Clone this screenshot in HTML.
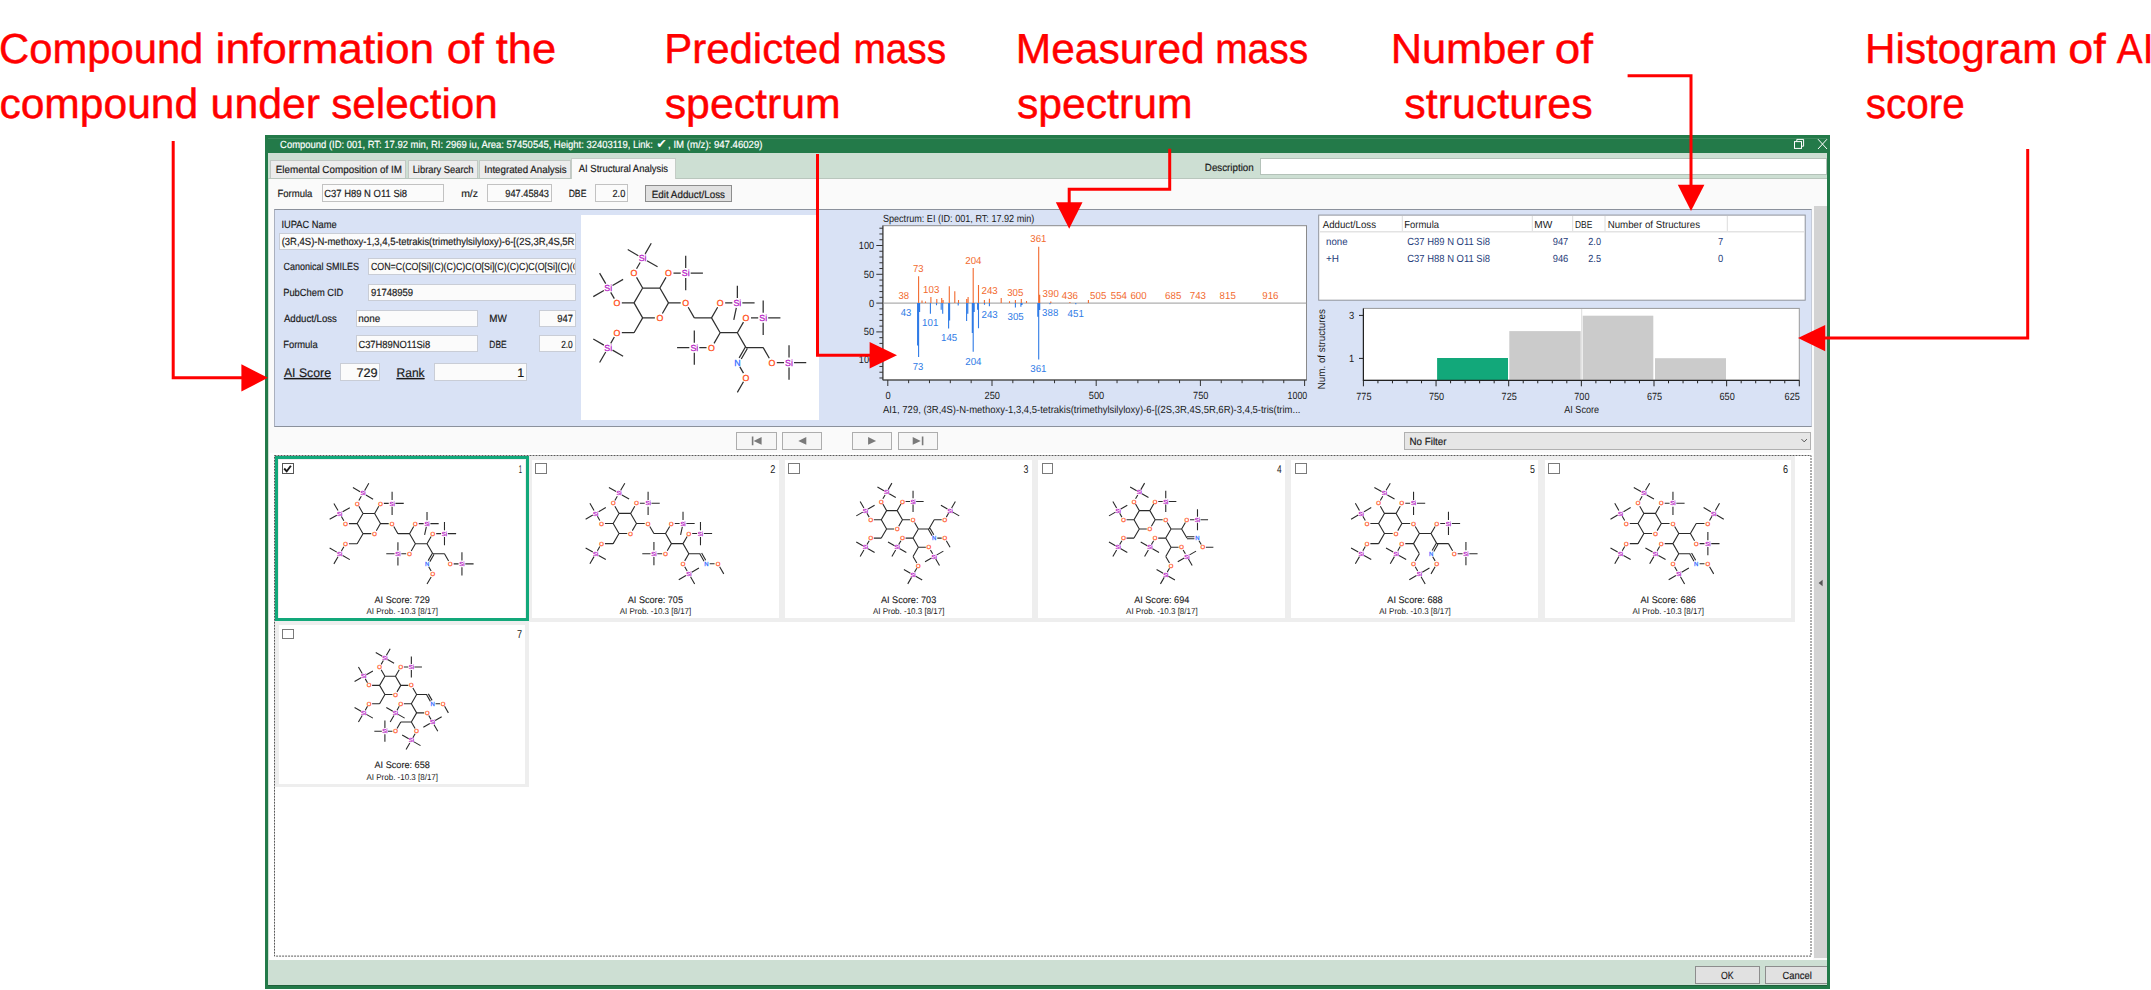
<!DOCTYPE html>
<html lang="en"><head><meta charset="utf-8"><title>AI Structural Analysis</title>
<style>
html,body{margin:0;padding:0;background:#fff;}
body{width:2151px;height:990px;position:relative;overflow:hidden;font-family:"Liberation Sans",sans-serif;}
.b{position:absolute;box-sizing:border-box;}
body>svg{position:absolute;left:0;top:0;}
</style></head><body>
<div class="b" style="left:264.6px;top:135px;width:1565.4px;height:854px;background:#237a49;"></div>
<div class="b" style="left:267.6px;top:153.3px;width:1559.4px;height:831.9px;background:#cddfd3;"></div>
<div class="b" style="left:268.6px;top:178.7px;width:1558.4px;height:781.3px;background:#fafafa;"></div>
<div class="b" style="left:267.6px;top:178.2px;width:1559.4px;height:1px;background:#b9c6bd;"></div>
<div class="b" style="left:267.6px;top:137.6px;width:1559.4px;height:1px;background:#3d8a5e;"></div>
<div class="b" style="left:1260.4px;top:157.9px;width:566.6px;height:17.4px;background:#fff;border:1px solid #b4c2b9;"></div>
<div class="b" style="left:270.3px;top:160.4px;width:136px;height:18px;background:#ececec;border:1px solid #c2c8c4;border-bottom:none;"></div>
<div class="b" style="left:407.7px;top:160.4px;width:70.3px;height:18px;background:#ececec;border:1px solid #c2c8c4;border-bottom:none;"></div>
<div class="b" style="left:479.4px;top:160.4px;width:92px;height:18px;background:#ececec;border:1px solid #c2c8c4;border-bottom:none;"></div>
<div class="b" style="left:571.4px;top:158.3px;width:105px;height:21.1px;background:#fafafa;border:1px solid #c4ccc6;border-bottom:none;"></div>
<div class="b" style="left:321.8px;top:184.4px;width:122px;height:17.6px;background:#fbfbfb;border:1px solid #c2c2c2;"></div>
<div class="b" style="left:487px;top:184.4px;width:64.6px;height:17.6px;background:#fbfbfb;border:1px solid #c2c2c2;"></div>
<div class="b" style="left:595.2px;top:184.4px;width:32.5px;height:17.6px;background:#fbfbfb;border:1px solid #c2c2c2;"></div>
<div class="b" style="left:645px;top:184.5px;width:87px;height:17.7px;background:#e1e1e1;border:1px solid #8d8d8d;border-bottom-width:1.6px;border-right-width:1.4px;"></div>
<div class="b" style="left:274px;top:209.2px;width:1537.7px;height:217.4px;background:#d9e2f5;border:1px solid #8b919c;border-left-color:#aab0be;border-right-color:#c5cbd8;"></div>
<div class="b" style="left:279.4px;top:233px;width:296.2px;height:16.7px;background:#fbfbfb;border:1px solid #c9cdd6;"></div>
<div class="b" style="left:368.3px;top:257.5px;width:207.3px;height:17px;background:#fbfbfb;border:1px solid #c9cdd6;"></div>
<div class="b" style="left:368.3px;top:283.5px;width:207.3px;height:17px;background:#fbfbfb;border:1px solid #c9cdd6;"></div>
<div class="b" style="left:356.3px;top:309.5px;width:121.5px;height:17px;background:#fbfbfb;border:1px solid #c9cdd6;"></div>
<div class="b" style="left:539.2px;top:309.5px;width:36.4px;height:17px;background:#fbfbfb;border:1px solid #c9cdd6;"></div>
<div class="b" style="left:356.3px;top:335.4px;width:121.5px;height:17px;background:#fbfbfb;border:1px solid #c9cdd6;"></div>
<div class="b" style="left:539.2px;top:335.4px;width:36.4px;height:17px;background:#fbfbfb;border:1px solid #c9cdd6;"></div>
<div class="b" style="left:339.9px;top:363.4px;width:39.7px;height:18.1px;background:#fbfbfb;border:1px solid #c9cdd6;"></div>
<div class="b" style="left:434.4px;top:363.4px;width:92.6px;height:18.1px;background:#fbfbfb;border:1px solid #c9cdd6;"></div>
<div class="b" style="left:581.2px;top:215px;width:238.3px;height:205px;background:#fff;"></div>
<div class="b" style="left:736.2px;top:432.3px;width:40.5px;height:17.3px;background:#f6f6f6;border:1px solid #adadad;"></div>
<div class="b" style="left:781.9px;top:432.3px;width:40.2px;height:17.3px;background:#f6f6f6;border:1px solid #adadad;"></div>
<div class="b" style="left:851.9px;top:432.3px;width:40.2px;height:17.3px;background:#f6f6f6;border:1px solid #adadad;"></div>
<div class="b" style="left:897.5px;top:432.3px;width:40.4px;height:17.3px;background:#f6f6f6;border:1px solid #adadad;"></div>
<div class="b" style="left:1404.3px;top:432.3px;width:406.7px;height:17.5px;background:#e6e6e6;border:1px solid #b0b0b0;"></div>
<div class="b" style="left:269.7px;top:452.5px;width:1543.8px;height:507.5px;background:#fff;"></div>
<div class="b" style="left:275.3px;top:456.3px;width:253.4px;height:165.3px;background:#eeeeee;"></div>
<div class="b" style="left:278.6px;top:459.6px;width:246.8px;height:158.7px;background:#fff;"></div>
<div class="b" style="left:275.1px;top:456.2px;width:253.6px;height:165.3px;border:3.2px solid #12a87a;"></div>
<div class="b" style="left:282px;top:463.3px;width:11.8px;height:10.5px;background:#fff;border:1px solid #555;"></div>
<div class="b" style="left:528.5px;top:456.3px;width:253.4px;height:165.3px;background:#eeeeee;"></div>
<div class="b" style="left:531.8px;top:459.6px;width:246.8px;height:158.7px;background:#fff;"></div>
<div class="b" style="left:535.2px;top:463.3px;width:11.8px;height:10.5px;background:#fff;border:1px solid #7a7a7a;"></div>
<div class="b" style="left:781.7px;top:456.3px;width:253.4px;height:165.3px;background:#eeeeee;"></div>
<div class="b" style="left:785px;top:459.6px;width:246.8px;height:158.7px;background:#fff;"></div>
<div class="b" style="left:788.4px;top:463.3px;width:11.8px;height:10.5px;background:#fff;border:1px solid #7a7a7a;"></div>
<div class="b" style="left:1034.9px;top:456.3px;width:253.4px;height:165.3px;background:#eeeeee;"></div>
<div class="b" style="left:1038.2px;top:459.6px;width:246.8px;height:158.7px;background:#fff;"></div>
<div class="b" style="left:1041.6px;top:463.3px;width:11.8px;height:10.5px;background:#fff;border:1px solid #7a7a7a;"></div>
<div class="b" style="left:1288.1px;top:456.3px;width:253.4px;height:165.3px;background:#eeeeee;"></div>
<div class="b" style="left:1291.4px;top:459.6px;width:246.8px;height:158.7px;background:#fff;"></div>
<div class="b" style="left:1294.8px;top:463.3px;width:11.8px;height:10.5px;background:#fff;border:1px solid #7a7a7a;"></div>
<div class="b" style="left:1541.3px;top:456.3px;width:253.4px;height:165.3px;background:#eeeeee;"></div>
<div class="b" style="left:1544.6px;top:459.6px;width:246.8px;height:158.7px;background:#fff;"></div>
<div class="b" style="left:1548px;top:463.3px;width:11.8px;height:10.5px;background:#fff;border:1px solid #7a7a7a;"></div>
<div class="b" style="left:275.3px;top:621.7px;width:253.4px;height:165.3px;background:#eeeeee;"></div>
<div class="b" style="left:278.6px;top:625px;width:246.8px;height:158.7px;background:#fff;"></div>
<div class="b" style="left:282px;top:628.7px;width:11.8px;height:10.5px;background:#fff;border:1px solid #7a7a7a;"></div>
<div class="b" style="left:1814px;top:206px;width:12.6px;height:752px;background:#d3d3d3;"></div>
<div class="b" style="left:1695px;top:966.4px;width:64.5px;height:17.3px;background:#e1e1e1;border:1px solid #8d8d8d;"></div>
<div class="b" style="left:1764.7px;top:966.4px;width:64.3px;height:17.3px;background:#e1e1e1;border:1px solid #8d8d8d;border-right:none;width:62.3px;"></div>
<div class="b" style="left:1827px;top:135px;width:3px;height:854px;background:#237a49;"></div>
<div class="b" style="left:264.6px;top:985.2px;width:1565.4px;height:3.8px;background:#237a49;"></div>
<div class="b" style="left:267.6px;top:984.7px;width:1559.4px;height:1px;background:#1f5f3a;"></div>
<svg width="2151" height="990" viewBox="0 0 2151 990" text-rendering="geometricPrecision" font-family="Liberation Sans, sans-serif">
<g fill="#1a1a1a" stroke="#1a1a1a" stroke-width="0.18">
<text y="63" font-size="42" fill="#ff0000" stroke="#ff0000" stroke-width="0.45"><tspan x="-0.94" textLength="204.27" lengthAdjust="spacingAndGlyphs">Compound</tspan> <tspan x="215.63" textLength="218.53" lengthAdjust="spacingAndGlyphs">information</tspan> <tspan x="446.79" textLength="36.97" lengthAdjust="spacingAndGlyphs">of</tspan> <tspan x="495.7" textLength="60.37" lengthAdjust="spacingAndGlyphs">the</tspan></text>
<text y="118" font-size="42" fill="#ff0000" stroke="#ff0000" stroke-width="0.45"><tspan x="-0.64" textLength="198.81" lengthAdjust="spacingAndGlyphs">compound</tspan> <tspan x="210.61" textLength="109.41" lengthAdjust="spacingAndGlyphs">under</tspan> <tspan x="331.21" textLength="166.53" lengthAdjust="spacingAndGlyphs">selection</tspan></text>
<text y="63" font-size="42" fill="#ff0000" stroke="#ff0000" stroke-width="0.45"><tspan x="664.21" textLength="177.25" lengthAdjust="spacingAndGlyphs">Predicted</tspan> <tspan x="853.39" textLength="92.66" lengthAdjust="spacingAndGlyphs">mass</tspan></text>
<text y="118" font-size="42" fill="#ff0000" stroke="#ff0000" stroke-width="0.45"><tspan x="664.69" textLength="175.95" lengthAdjust="spacingAndGlyphs">spectrum</tspan></text>
<text y="63" font-size="42" fill="#ff0000" stroke="#ff0000" stroke-width="0.45"><tspan x="1015.87" textLength="188.89" lengthAdjust="spacingAndGlyphs">Measured</tspan> <tspan x="1215.29" textLength="92.77" lengthAdjust="spacingAndGlyphs">mass</tspan></text>
<text y="118" font-size="42" fill="#ff0000" stroke="#ff0000" stroke-width="0.45"><tspan x="1016.9" textLength="175.64" lengthAdjust="spacingAndGlyphs">spectrum</tspan></text>
<text y="63" font-size="42" fill="#ff0000" stroke="#ff0000" stroke-width="0.45"><tspan x="1390.69" textLength="154.24" lengthAdjust="spacingAndGlyphs">Number</tspan> <tspan x="1554.73" textLength="38.13" lengthAdjust="spacingAndGlyphs">of</tspan></text>
<text y="118" font-size="42" fill="#ff0000" stroke="#ff0000" stroke-width="0.45"><tspan x="1404.29" textLength="188.31" lengthAdjust="spacingAndGlyphs">structures</tspan></text>
<text y="63" font-size="42" fill="#ff0000" stroke="#ff0000" stroke-width="0.45"><tspan x="1865.09" textLength="192.29" lengthAdjust="spacingAndGlyphs">Histogram</tspan> <tspan x="2068.16" textLength="37.5" lengthAdjust="spacingAndGlyphs">of</tspan> <tspan x="2116.87" textLength="36.53" lengthAdjust="spacingAndGlyphs">AI</tspan></text>
<text y="118" font-size="42" fill="#ff0000" stroke="#ff0000" stroke-width="0.45"><tspan x="1865.66" textLength="98.99" lengthAdjust="spacingAndGlyphs">score</tspan></text>
<text y="147.6" font-size="10.4" fill="#fff" stroke="#fff"><tspan x="280.08" textLength="372.83" lengthAdjust="spacingAndGlyphs">Compound (ID: 001, RT: 17.92 min, RI: 2969 iu, Area: 57450545, Height: 32403119, Link:</tspan> <tspan x="656.2" y="148.2" font-size="12.6" stroke="none" font-family="DejaVu Sans, sans-serif">✔</tspan><tspan y="147.6" x="668.1" textLength="94.35" lengthAdjust="spacingAndGlyphs">, IM (m/z): 947.46029)</tspan></text>
<text x="1204.85" y="171" font-size="10.4" textLength="48.82" lengthAdjust="spacingAndGlyphs" fill="#1a1a1a">Description</text>
<text x="275.74" y="173.1" font-size="10.4" textLength="126.12" lengthAdjust="spacingAndGlyphs" fill="#1a1a1a">Elemental Composition of IM</text>
<text x="412.68" y="173.1" font-size="10.4" textLength="60.76" lengthAdjust="spacingAndGlyphs" fill="#1a1a1a">Library Search</text>
<text x="484.25" y="173.1" font-size="10.4" textLength="82.34" lengthAdjust="spacingAndGlyphs" fill="#1a1a1a">Integrated Analysis</text>
<text x="578.83" y="171.7" font-size="10.4" textLength="89.16" lengthAdjust="spacingAndGlyphs" fill="#1a1a1a">AI Structural Analysis</text>
<text x="277.47" y="197.1" font-size="10.4" textLength="34.88" lengthAdjust="spacingAndGlyphs" fill="#1a1a1a">Formula</text>
<text x="324.18" y="197.1" font-size="10.4" textLength="82.88" lengthAdjust="spacingAndGlyphs" fill="#1a1a1a">C37 H89 N O11 Si8</text>
<text x="461.16" y="197.1" font-size="10.4" textLength="16.8" lengthAdjust="spacingAndGlyphs" fill="#1a1a1a">m/z</text>
<text x="505.33" y="197.1" font-size="10.4" textLength="43.62" lengthAdjust="spacingAndGlyphs" fill="#1a1a1a">947.45843</text>
<text x="568.64" y="197.1" font-size="10.4" textLength="17.77" lengthAdjust="spacingAndGlyphs" fill="#1a1a1a">DBE</text>
<text x="612.49" y="197.1" font-size="10.4" textLength="12.81" lengthAdjust="spacingAndGlyphs" fill="#1a1a1a">2.0</text>
<text x="651.74" y="197.5" font-size="10.4" textLength="73.26" lengthAdjust="spacingAndGlyphs" fill="#1a1a1a">Edit Adduct/Loss</text>
<text x="281.5" y="227.7" font-size="10.4" textLength="55.07" lengthAdjust="spacingAndGlyphs" fill="#1a1a1a">IUPAC Name</text>
<text x="281.66" y="245.2" font-size="10.4" textLength="292.82" lengthAdjust="spacingAndGlyphs" fill="#1a1a1a">(3R,4S)-N-methoxy-1,3,4,5-tetrakis(trimethylsilyloxy)-6-[(2S,3R,4S,5R</text>
<text x="283.5" y="269.8" font-size="10.4" textLength="75.46" lengthAdjust="spacingAndGlyphs" fill="#1a1a1a">Canonical SMILES</text>
<svg x="369.3" y="258.6" width="205.3" height="14.8" overflow="hidden"><text x="1.61" y="11.4" font-size="10.4" textLength="217.58" lengthAdjust="spacingAndGlyphs" fill="#1a1a1a">CON=C(CO[Si](C)(C)C)C(O[Si](C)(C)C)C(O[Si](C)(C)C</text></svg>
<text x="283.18" y="295.6" font-size="10.4" textLength="60.2" lengthAdjust="spacingAndGlyphs" fill="#1a1a1a">PubChem CID</text>
<text x="370.91" y="295.6" font-size="10.4" textLength="42.18" lengthAdjust="spacingAndGlyphs" fill="#1a1a1a">91748959</text>
<text x="283.93" y="321.7" font-size="10.4" textLength="52.97" lengthAdjust="spacingAndGlyphs" fill="#1a1a1a">Adduct/Loss</text>
<text x="358.2" y="321.7" font-size="10.4" textLength="21.99" lengthAdjust="spacingAndGlyphs" fill="#1a1a1a">none</text>
<text x="489.24" y="321.7" font-size="10.4" textLength="17.54" lengthAdjust="spacingAndGlyphs" fill="#1a1a1a">MW</text>
<text x="557.32" y="321.7" font-size="10.4" textLength="15.6" lengthAdjust="spacingAndGlyphs" fill="#1a1a1a">947</text>
<text x="283.18" y="347.7" font-size="10.4" textLength="34.47" lengthAdjust="spacingAndGlyphs" fill="#1a1a1a">Formula</text>
<text x="358.38" y="347.7" font-size="10.4" textLength="71.78" lengthAdjust="spacingAndGlyphs" fill="#1a1a1a">C37H89NO11Si8</text>
<text x="489.36" y="347.7" font-size="10.4" textLength="17.24" lengthAdjust="spacingAndGlyphs" fill="#1a1a1a">DBE</text>
<text x="561.13" y="347.7" font-size="10.4" textLength="11.64" lengthAdjust="spacingAndGlyphs" fill="#1a1a1a">2.0</text>
<text x="283.93" y="377" font-size="12.5" textLength="47.06" lengthAdjust="spacingAndGlyphs" fill="#1a1a1a" text-decoration="underline">AI Score</text>
<text x="356.5" y="377" font-size="12.5" textLength="21.15" lengthAdjust="spacingAndGlyphs" fill="#1a1a1a">729</text>
<text x="396.56" y="377" font-size="12.5" textLength="28.07" lengthAdjust="spacingAndGlyphs" fill="#1a1a1a" text-decoration="underline">Rank</text>
<text x="517.35" y="377" font-size="12.5" fill="#1a1a1a">1</text>
<text x="1409.55" y="445" font-size="10.4" textLength="36.96" lengthAdjust="spacingAndGlyphs" fill="#1a1a1a">No Filter</text>
<text x="518.81" y="472.8" font-size="11.3" textLength="3.22" lengthAdjust="spacingAndGlyphs" fill="#1a1a1a" stroke="none">1</text>
<text x="374.53" y="602.8" font-size="9.5" textLength="55.35" lengthAdjust="spacingAndGlyphs" fill="#1a1a1a" stroke-width="0.1">AI Score: 729</text>
<text x="366.48" y="614.3" font-size="8.5" textLength="71.58" lengthAdjust="spacingAndGlyphs" fill="#1a1a1a" stroke="none">AI Prob. -10.3 [8/17]</text>
<text x="770.29" y="472.8" font-size="11.3" textLength="5.12" lengthAdjust="spacingAndGlyphs" fill="#1a1a1a" stroke="none">2</text>
<text x="627.73" y="602.8" font-size="9.5" textLength="55.29" lengthAdjust="spacingAndGlyphs" fill="#1a1a1a" stroke-width="0.1">AI Score: 705</text>
<text x="619.68" y="614.3" font-size="8.5" textLength="71.58" lengthAdjust="spacingAndGlyphs" fill="#1a1a1a" stroke="none">AI Prob. -10.3 [8/17]</text>
<text x="1023.61" y="472.8" font-size="11.3" textLength="4.92" lengthAdjust="spacingAndGlyphs" fill="#1a1a1a" stroke="none">3</text>
<text x="880.93" y="602.8" font-size="9.5" textLength="55.31" lengthAdjust="spacingAndGlyphs" fill="#1a1a1a" stroke-width="0.1">AI Score: 703</text>
<text x="872.88" y="614.3" font-size="8.5" textLength="71.58" lengthAdjust="spacingAndGlyphs" fill="#1a1a1a" stroke="none">AI Prob. -10.3 [8/17]</text>
<text x="1276.97" y="472.8" font-size="11.3" textLength="4.63" lengthAdjust="spacingAndGlyphs" fill="#1a1a1a" stroke="none">4</text>
<text x="1134.13" y="602.8" font-size="9.5" textLength="55.18" lengthAdjust="spacingAndGlyphs" fill="#1a1a1a" stroke-width="0.1">AI Score: 694</text>
<text x="1126.08" y="614.3" font-size="8.5" textLength="71.58" lengthAdjust="spacingAndGlyphs" fill="#1a1a1a" stroke="none">AI Prob. -10.3 [8/17]</text>
<text x="1530" y="472.8" font-size="11.3" textLength="4.92" lengthAdjust="spacingAndGlyphs" fill="#1a1a1a" stroke="none">5</text>
<text x="1387.33" y="602.8" font-size="9.5" textLength="55.31" lengthAdjust="spacingAndGlyphs" fill="#1a1a1a" stroke-width="0.1">AI Score: 688</text>
<text x="1379.28" y="614.3" font-size="8.5" textLength="71.58" lengthAdjust="spacingAndGlyphs" fill="#1a1a1a" stroke="none">AI Prob. -10.3 [8/17]</text>
<text x="1783.1" y="472.8" font-size="11.3" textLength="5.05" lengthAdjust="spacingAndGlyphs" fill="#1a1a1a" stroke="none">6</text>
<text x="1640.53" y="602.8" font-size="9.5" textLength="55.31" lengthAdjust="spacingAndGlyphs" fill="#1a1a1a" stroke-width="0.1">AI Score: 686</text>
<text x="1632.48" y="614.3" font-size="8.5" textLength="71.58" lengthAdjust="spacingAndGlyphs" fill="#1a1a1a" stroke="none">AI Prob. -10.3 [8/17]</text>
<text x="517.08" y="638.2" font-size="11.3" textLength="5.13" lengthAdjust="spacingAndGlyphs" fill="#1a1a1a" stroke="none">7</text>
<text x="374.53" y="768.2" font-size="9.5" textLength="55.31" lengthAdjust="spacingAndGlyphs" fill="#1a1a1a" stroke-width="0.1">AI Score: 658</text>
<text x="366.48" y="779.7" font-size="8.5" textLength="71.58" lengthAdjust="spacingAndGlyphs" fill="#1a1a1a" stroke="none">AI Prob. -10.3 [8/17]</text>
<text x="1720.94" y="979" font-size="10.4" textLength="12.6" lengthAdjust="spacingAndGlyphs" fill="#1a1a1a">OK</text>
<text x="1782.58" y="979" font-size="10.4" textLength="29.19" lengthAdjust="spacingAndGlyphs" fill="#1a1a1a">Cancel</text>
</g>
<g font-family="Liberation Sans, sans-serif">
<path d="M642.65 288L659.87 288M659.87 288L668.48 302.91M668.48 302.91L662.37 313.5M654.88 317.83L642.65 317.83M642.65 317.83L634.04 302.91M634.04 302.91L642.65 288M642.65 288L636.54 277.41M636.54 268.76L640.15 262.5M638.33 255.68L627.74 249.56M645.15 253.85L651.26 243.26M646.97 260.67L657.56 266.78M659.87 288L665.98 277.41M673.47 273.09L680.71 273.09M685.7 268.09L685.7 255.87M690.69 273.09L702.92 273.09M685.7 278.08L685.7 290.31M634.04 302.91L621.81 302.91M614.32 298.59L610.71 292.32M605.71 283.68L599.6 273.09M612.53 285.5L623.12 279.39M603.89 290.5L593.3 296.61M642.65 317.83L634.04 332.74M634.04 332.74L621.81 332.74M614.32 337.06L610.71 343.33M603.89 345.15L593.3 339.04M612.53 350.15L623.12 356.26M605.71 351.98L599.6 362.56M668.48 302.91L680.71 302.91M688.2 307.24L694.31 317.83M694.31 317.83L711.53 317.83M711.53 317.83L717.64 307.24M725.13 302.91L732.37 302.91M737.36 297.92L737.36 285.69M742.35 302.91L754.58 302.91M736.32 307.8L733.78 319.76M711.53 317.83L720.14 332.74M720.14 332.74L714.03 343.33M706.54 347.65L699.3 347.65M694.31 342.66L694.31 330.43M689.32 347.65L677.09 347.65M694.31 352.65L694.31 364.87M720.14 332.74L737.36 332.74M737.36 332.74L743.47 322.15M750.96 317.83L758.2 317.83M763.19 312.83L763.19 300.61M768.18 317.83L780.41 317.83M763.19 322.82L763.19 335.05M737.36 332.74L745.97 347.65M745.97 347.65L763.19 347.65M763.19 347.65L769.3 358.24M776.79 362.56L784.03 362.56M789.02 357.57L789.02 345.34M794.01 362.56L806.24 362.56M789.02 367.56L789.02 379.78M745.28 347.25L739.16 357.84M747.36 348.45L741.24 359.04M739.86 366.89L743.47 373.15M743.47 381.8L737.36 392.39" fill="none" stroke="#303030" stroke-width="1.25" stroke-linecap="butt"/>
<g fill="#ff4a12" stroke="#ff4a12" stroke-width="0.25" font-size="8.8" text-anchor="middle">
<text x="659.87" y="320.98">O</text>
<text x="634.04" y="276.24">O</text>
<text x="668.48" y="276.24">O</text>
<text x="616.82" y="306.06">O</text>
<text x="616.82" y="335.89">O</text>
<text x="685.7" y="306.06">O</text>
<text x="720.14" y="306.06">O</text>
<text x="711.53" y="350.8">O</text>
<text x="745.97" y="320.98">O</text>
<text x="771.8" y="365.72">O</text>
<text x="745.97" y="380.63">O</text>
</g>
<g fill="#b414c4" stroke="#b414c4" stroke-width="0.25" font-size="8.8" text-anchor="middle">
<text x="642.65" y="261.32">Si</text>
<text x="685.7" y="276.24">Si</text>
<text x="608.21" y="291.15">Si</text>
<text x="608.21" y="350.8">Si</text>
<text x="737.36" y="306.06">Si</text>
<text x="694.31" y="350.8">Si</text>
<text x="763.19" y="320.98">Si</text>
<text x="789.02" y="365.72">Si</text>
</g>
<g fill="#2f6bff" stroke="#2f6bff" stroke-width="0.25" font-size="8.8" text-anchor="middle">
<text x="737.36" y="365.72">N</text>
</g>
</g>
<rect x="882.9" y="225.7" width="423.6" height="154.3" fill="#fff" stroke="#8a8a8a" stroke-width="1"/>
<path d="M882.9 225.7V380H1306.5" fill="none" stroke="#333" stroke-width="1"/>
<path d="M882.9 303.1H1306.5" stroke="#9a9a9a" stroke-width="1"/>
<path d="M879.4 377.98H882.9M879.4 372.22H882.9M879.4 366.46H882.9M876.3 360.7H882.9M879.4 354.94H882.9M879.4 349.18H882.9M879.4 343.42H882.9M879.4 337.66H882.9M876.3 331.9H882.9M879.4 326.14H882.9M879.4 320.38H882.9M879.4 314.62H882.9M879.4 308.86H882.9M876.3 303.1H882.9M879.4 297.34H882.9M879.4 291.58H882.9M879.4 285.82H882.9M879.4 280.06H882.9M876.3 274.3H882.9M879.4 268.54H882.9M879.4 262.78H882.9M879.4 257.02H882.9M879.4 251.26H882.9M876.3 245.5H882.9M879.4 239.74H882.9M879.4 233.98H882.9M879.4 228.22H882.9M887.8 380V386M908.64 380V383.2M929.48 380V383.2M950.32 380V383.2M971.16 380V383.2M992 380V386M1012.84 380V383.2M1033.68 380V383.2M1054.52 380V383.2M1075.36 380V383.2M1096.2 380V386M1117.04 380V383.2M1137.88 380V383.2M1158.72 380V383.2M1179.56 380V383.2M1200.4 380V386M1221.24 380V383.2M1242.08 380V383.2M1262.92 380V383.2M1283.76 380V383.2M1304.6 380V386" stroke="#333" stroke-width="1" fill="none"/>
<path d="M918.6 303.1V276.2M930.9 303.1V296.9M936.8 303.1V299.1M941.7 303.1V297.9M943.1 303.1V300.1M949.3 303.1V286.3M954.8 303.1V291.3M958.5 303.1V300.1M966.7 303.1V299.1M968.1 303.1V296.9M973.2 303.1V268.1M978.5 303.1V285.1M984.4 303.1V300.1M989.4 303.1V298.7M1001.2 303.1V297.9M1009.5 303.1V301.3M1015.4 303.1V300.1M1021.3 303.1V299.1M1026.5 303.1V300.9M1038.7 303.1V246.7M1039.7 303.1V294.7M1050.8 303.1V301.6M1088.4 303.1V300.1M1069.9 303.1V302M922 303.1V300.5M925.5 303.1V301.5" stroke="#f26a2e" stroke-width="1.1" fill="none"/>
<path d="M918.6 303.1V357.1M917.6 303.1V345.6M919.6 303.1V312M930.4 303.1V313.8M936.5 303.1V305.3M941.2 303.1V309.7M942.7 303.1V313.8M948.6 303.1V328.6M949.6 303.1V320.5M958.2 303.1V305.6M966.6 303.1V320.9M967.8 303.1V313.8M973.2 303.1V351.8M972.3 303.1V333M974.2 303.1V312M978.5 303.1V328.2M977.6 303.1V309.7M989.4 303.1V306.3M984.5 303.1V304.8M1015.4 303.1V307.5M1020.9 303.1V306.7M1022 303.1V305M1038.7 303.1V359.6M1037.8 303.1V316.8M1039.7 303.1V310M1075.8 303.1V304.2M1050 303.1V304.3" stroke="#2f7be6" stroke-width="1.1" fill="none"/>
<g font-family="Liberation Sans, sans-serif">
<text x="903.8" y="298.7" font-size="10.2" fill="#f26a2e" text-anchor="middle" textLength="10.6" lengthAdjust="spacingAndGlyphs">38</text>
<text x="918.2" y="272.3" font-size="10.2" fill="#f26a2e" text-anchor="middle" textLength="10.6" lengthAdjust="spacingAndGlyphs">73</text>
<text x="931.2" y="292.6" font-size="10.2" fill="#f26a2e" text-anchor="middle" textLength="16.2" lengthAdjust="spacingAndGlyphs">103</text>
<text x="973.4" y="263.5" font-size="10.2" fill="#f26a2e" text-anchor="middle" textLength="16.2" lengthAdjust="spacingAndGlyphs">204</text>
<text x="989.6" y="294" font-size="10.2" fill="#f26a2e" text-anchor="middle" textLength="16.2" lengthAdjust="spacingAndGlyphs">243</text>
<text x="1015.3" y="296.3" font-size="10.2" fill="#f26a2e" text-anchor="middle" textLength="16.2" lengthAdjust="spacingAndGlyphs">305</text>
<text x="1038.4" y="242.4" font-size="10.2" fill="#f26a2e" text-anchor="middle" textLength="16.2" lengthAdjust="spacingAndGlyphs">361</text>
<text x="1050.7" y="297" font-size="10.2" fill="#f26a2e" text-anchor="middle" textLength="16.2" lengthAdjust="spacingAndGlyphs">390</text>
<text x="1069.9" y="298.7" font-size="10.2" fill="#f26a2e" text-anchor="middle" textLength="16.2" lengthAdjust="spacingAndGlyphs">436</text>
<text x="1098.2" y="298.7" font-size="10.2" fill="#f26a2e" text-anchor="middle" textLength="16.2" lengthAdjust="spacingAndGlyphs">505</text>
<text x="1118.9" y="298.7" font-size="10.2" fill="#f26a2e" text-anchor="middle" textLength="16.2" lengthAdjust="spacingAndGlyphs">554</text>
<text x="1138.5" y="298.7" font-size="10.2" fill="#f26a2e" text-anchor="middle" textLength="16.2" lengthAdjust="spacingAndGlyphs">600</text>
<text x="1173.2" y="298.7" font-size="10.2" fill="#f26a2e" text-anchor="middle" textLength="16.2" lengthAdjust="spacingAndGlyphs">685</text>
<text x="1197.9" y="298.7" font-size="10.2" fill="#f26a2e" text-anchor="middle" textLength="16.2" lengthAdjust="spacingAndGlyphs">743</text>
<text x="1227.7" y="298.7" font-size="10.2" fill="#f26a2e" text-anchor="middle" textLength="16.2" lengthAdjust="spacingAndGlyphs">815</text>
<text x="1270.4" y="298.7" font-size="10.2" fill="#f26a2e" text-anchor="middle" textLength="16.2" lengthAdjust="spacingAndGlyphs">916</text>
<text x="906" y="316.4" font-size="10.2" fill="#2f7be6" text-anchor="middle" textLength="10.6" lengthAdjust="spacingAndGlyphs">43</text>
<text x="930.2" y="326.1" font-size="10.2" fill="#2f7be6" text-anchor="middle" textLength="16.2" lengthAdjust="spacingAndGlyphs">101</text>
<text x="949.1" y="341.4" font-size="10.2" fill="#2f7be6" text-anchor="middle" textLength="16.2" lengthAdjust="spacingAndGlyphs">145</text>
<text x="918.1" y="369.7" font-size="10.2" fill="#2f7be6" text-anchor="middle" textLength="10.6" lengthAdjust="spacingAndGlyphs">73</text>
<text x="973.4" y="364.9" font-size="10.2" fill="#2f7be6" text-anchor="middle" textLength="16.2" lengthAdjust="spacingAndGlyphs">204</text>
<text x="989.6" y="317.6" font-size="10.2" fill="#2f7be6" text-anchor="middle" textLength="16.2" lengthAdjust="spacingAndGlyphs">243</text>
<text x="1015.6" y="319.5" font-size="10.2" fill="#2f7be6" text-anchor="middle" textLength="16.2" lengthAdjust="spacingAndGlyphs">305</text>
<text x="1038.4" y="372.2" font-size="10.2" fill="#2f7be6" text-anchor="middle" textLength="16.2" lengthAdjust="spacingAndGlyphs">361</text>
<text x="1050.2" y="316.4" font-size="10.2" fill="#2f7be6" text-anchor="middle" textLength="16.2" lengthAdjust="spacingAndGlyphs">388</text>
<text x="1075.7" y="316.9" font-size="10.2" fill="#2f7be6" text-anchor="middle" textLength="16.2" lengthAdjust="spacingAndGlyphs">451</text>
<text x="874.2" y="249" font-size="10.4" fill="#1a1a1a" text-anchor="end" textLength="15.4" lengthAdjust="spacingAndGlyphs">100</text>
<text x="874.2" y="277.8" font-size="10.4" fill="#1a1a1a" text-anchor="end" textLength="10.4" lengthAdjust="spacingAndGlyphs">50</text>
<text x="874.2" y="306.5" font-size="10.4" fill="#1a1a1a" text-anchor="end" textLength="5.2" lengthAdjust="spacingAndGlyphs">0</text>
<text x="874.2" y="334.8" font-size="10.4" fill="#1a1a1a" text-anchor="end" textLength="10.4" lengthAdjust="spacingAndGlyphs">50</text>
<text x="874.2" y="363.4" font-size="10.4" fill="#1a1a1a" text-anchor="end" textLength="15.4" lengthAdjust="spacingAndGlyphs">100</text>
<text x="888.2" y="398.8" font-size="10.4" fill="#1a1a1a" text-anchor="middle" textLength="5.2" lengthAdjust="spacingAndGlyphs">0</text>
<text x="992.3" y="398.8" font-size="10.4" fill="#1a1a1a" text-anchor="middle" textLength="15.4" lengthAdjust="spacingAndGlyphs">250</text>
<text x="1096.5" y="398.8" font-size="10.4" fill="#1a1a1a" text-anchor="middle" textLength="15.4" lengthAdjust="spacingAndGlyphs">500</text>
<text x="1200.8" y="398.8" font-size="10.4" fill="#1a1a1a" text-anchor="middle" textLength="15.4" lengthAdjust="spacingAndGlyphs">750</text>
<text x="1297.4" y="398.8" font-size="10.4" fill="#1a1a1a" text-anchor="middle" textLength="19.6" lengthAdjust="spacingAndGlyphs">1000</text>
<text x="882.9" y="221.8" font-size="10.3" fill="#1a1a1a" text-anchor="start" textLength="151.5" lengthAdjust="spacingAndGlyphs">Spectrum: EI (ID: 001, RT: 17.92 min)</text>
<text x="882.9" y="413.4" font-size="10.3" fill="#1a1a1a" text-anchor="start" textLength="417.5" lengthAdjust="spacingAndGlyphs">AI1, 729, (3R,4S)-N-methoxy-1,3,4,5-tetrakis(trimethylsilyloxy)-6-[(2S,3R,4S,5R,6R)-3,4,5-tris(trim...</text>
</g>
<rect x="1318.7" y="215.1" width="486.5" height="85.1" fill="#fff" stroke="#8f939b" stroke-width="1"/>
<path d="M1320 231.7H1804" stroke="#e3e3e3" stroke-width="1.6"/>
<path d="M1402.3 216V231M1532.3 216V231M1572.7 216V231M1605 216V231M1727.3 216V231" stroke="#dcdcdc" stroke-width="1"/>
<g font-family="Liberation Sans, sans-serif">
<text x="1322.7" y="228.3" font-size="10.3" fill="#1a1a1a" text-anchor="start" textLength="53.3" lengthAdjust="spacingAndGlyphs">Adduct/Loss</text>
<text x="1404.3" y="228.3" font-size="10.3" fill="#1a1a1a" text-anchor="start" textLength="34.7" lengthAdjust="spacingAndGlyphs">Formula</text>
<text x="1534.3" y="228.3" font-size="10.3" fill="#1a1a1a" text-anchor="start" textLength="18" lengthAdjust="spacingAndGlyphs">MW</text>
<text x="1575" y="228.3" font-size="10.3" fill="#1a1a1a" text-anchor="start" textLength="17.3" lengthAdjust="spacingAndGlyphs">DBE</text>
<text x="1607.7" y="228.3" font-size="10.3" fill="#1a1a1a" text-anchor="start" textLength="92.3" lengthAdjust="spacingAndGlyphs">Number of Structures</text>
<text x="1326" y="245" font-size="10.3" fill="#1f3d7a" text-anchor="start" textLength="21.7" lengthAdjust="spacingAndGlyphs">none</text>
<text x="1407.3" y="245" font-size="10.3" fill="#1f3d7a" text-anchor="start" textLength="82.7" lengthAdjust="spacingAndGlyphs">C37 H89 N O11 Si8</text>
<text x="1568.3" y="245" font-size="10.3" fill="#1f3d7a" text-anchor="end" textLength="15.6" lengthAdjust="spacingAndGlyphs">947</text>
<text x="1601" y="245" font-size="10.3" fill="#1f3d7a" text-anchor="end" textLength="12.7" lengthAdjust="spacingAndGlyphs">2.0</text>
<text x="1723.3" y="245" font-size="10.3" fill="#1f3d7a" text-anchor="end" textLength="5.2" lengthAdjust="spacingAndGlyphs">7</text>
<text x="1326" y="262" font-size="10.3" fill="#1f3d7a" text-anchor="start" textLength="13" lengthAdjust="spacingAndGlyphs">+H</text>
<text x="1407.3" y="262" font-size="10.3" fill="#1f3d7a" text-anchor="start" textLength="82.7" lengthAdjust="spacingAndGlyphs">C37 H88 N O11 Si8</text>
<text x="1568.3" y="262" font-size="10.3" fill="#1f3d7a" text-anchor="end" textLength="15.6" lengthAdjust="spacingAndGlyphs">946</text>
<text x="1601" y="262" font-size="10.3" fill="#1f3d7a" text-anchor="end" textLength="12.7" lengthAdjust="spacingAndGlyphs">2.5</text>
<text x="1723.3" y="262" font-size="10.3" fill="#1f3d7a" text-anchor="end" textLength="5.2" lengthAdjust="spacingAndGlyphs">0</text>
</g>
<rect x="1363.4" y="308.4" width="435.9" height="71.9" fill="#fff" stroke="#9a9a9a" stroke-width="1"/>
<rect x="1437.1" y="358" width="70.9" height="22.3" fill="#12a87a"/>
<rect x="1509.3" y="331.1" width="71.4" height="49.2" fill="#cbcbcb"/>
<rect x="1582.7" y="315.7" width="70.6" height="64.6" fill="#cbcbcb"/>
<rect x="1655" y="358.2" width="71" height="22.1" fill="#cbcbcb"/>
<path d="M1581.7 309V380" stroke="#dddddd" stroke-width="1"/>
<path d="M1363.4 308.4V380.3H1799.3" fill="none" stroke="#222" stroke-width="1.2"/>
<path d="M1363.4 380.3V386.3M1377.93 380.3V383.3M1392.46 380.3V383.3M1406.99 380.3V383.3M1421.52 380.3V383.3M1436.05 380.3V386.3M1450.58 380.3V383.3M1465.11 380.3V383.3M1479.64 380.3V383.3M1494.17 380.3V383.3M1508.7 380.3V386.3M1523.23 380.3V383.3M1537.76 380.3V383.3M1552.29 380.3V383.3M1566.82 380.3V383.3M1581.35 380.3V386.3M1595.88 380.3V383.3M1610.41 380.3V383.3M1624.94 380.3V383.3M1639.47 380.3V383.3M1654 380.3V386.3M1668.53 380.3V383.3M1683.06 380.3V383.3M1697.59 380.3V383.3M1712.12 380.3V383.3M1726.65 380.3V386.3M1741.18 380.3V383.3M1755.71 380.3V383.3M1770.24 380.3V383.3M1784.77 380.3V383.3M1799.3 380.3V386.3M1359 315.4H1363.4M1359 358.4H1363.4" stroke="#222" stroke-width="1" fill="none"/>
<g font-family="Liberation Sans, sans-serif">
<text x="1363.9" y="400" font-size="10.4" fill="#1a1a1a" text-anchor="middle" textLength="15.2" lengthAdjust="spacingAndGlyphs">775</text>
<text x="1436.55" y="400" font-size="10.4" fill="#1a1a1a" text-anchor="middle" textLength="15.2" lengthAdjust="spacingAndGlyphs">750</text>
<text x="1509.2" y="400" font-size="10.4" fill="#1a1a1a" text-anchor="middle" textLength="15.2" lengthAdjust="spacingAndGlyphs">725</text>
<text x="1581.85" y="400" font-size="10.4" fill="#1a1a1a" text-anchor="middle" textLength="15.2" lengthAdjust="spacingAndGlyphs">700</text>
<text x="1654.5" y="400" font-size="10.4" fill="#1a1a1a" text-anchor="middle" textLength="15.2" lengthAdjust="spacingAndGlyphs">675</text>
<text x="1727.15" y="400" font-size="10.4" fill="#1a1a1a" text-anchor="middle" textLength="15.2" lengthAdjust="spacingAndGlyphs">650</text>
<text x="1792.2" y="400" font-size="10.4" fill="#1a1a1a" text-anchor="middle" textLength="15.2" lengthAdjust="spacingAndGlyphs">625</text>
<text x="1354.3" y="318.9" font-size="10.4" fill="#1a1a1a" text-anchor="end" textLength="5.2" lengthAdjust="spacingAndGlyphs">3</text>
<text x="1354.3" y="361.9" font-size="10.4" fill="#1a1a1a" text-anchor="end" textLength="5.2" lengthAdjust="spacingAndGlyphs">1</text>
<text x="1581.7" y="413" font-size="10.3" fill="#1a1a1a" text-anchor="middle" textLength="35" lengthAdjust="spacingAndGlyphs">AI Score</text>
<text transform="translate(1325.4 349.2) rotate(-90)" font-size="10.3" fill="#1a1a1a" text-anchor="middle" textLength="80" lengthAdjust="spacingAndGlyphs">Num. of structures</text>
</g>
<path d="M753.6 440.9L761.6 437.1V444.7ZM798.3 440.9L806.3 437.1V444.7ZM876.1 440.9L868.1 437.1V444.7ZM920.7 440.9L912.7 437.1V444.7Z" fill="#7a7a7a"/>
<path d="M752.6 436.5V445.3M922.6 436.5V445.3" stroke="#7a7a7a" stroke-width="1.6"/>
<path d="M1801.5 439.1L1804.2 441.9L1806.9 439.1" fill="none" stroke="#555" stroke-width="1"/>
<rect x="274.5" y="455.5" width="1536.5" height="500.6" fill="none" stroke="#5a5a5a" stroke-width="1" stroke-dasharray="2 1"/>
<g font-family="Liberation Sans, sans-serif">
<path d="M363 513.5L374.64 513.5M374.64 513.5L380.46 523.58M380.46 523.58L376.33 530.74M371.26 533.66L363 533.66M363 533.66L357.18 523.58M357.18 523.58L363 513.5M363 513.5L358.87 506.34M358.87 500.5L361.31 496.26M360.08 491.65L352.92 487.52M364.69 490.42L368.82 483.26M365.92 495.03L373.08 499.16M374.64 513.5L378.77 506.34M383.84 503.42L388.72 503.42M392.1 500.04L392.1 491.78M395.48 503.42L403.74 503.42M392.1 506.8L392.1 515.06M357.18 523.58L348.92 523.58M343.85 520.66L341.41 516.42M338.03 510.58L333.9 503.42M342.64 511.81L349.8 507.68M336.8 515.19L329.64 519.32M363 533.66L357.18 543.74M357.18 543.74L348.92 543.74M343.85 546.66L341.41 550.9M336.8 552.13L329.64 548M342.64 555.51L349.8 559.64M338.03 556.75L333.9 563.9M380.46 523.58L388.72 523.58M393.79 526.5L397.92 533.66M397.92 533.66L409.56 533.66M409.56 533.66L413.69 526.5M418.76 523.58L423.64 523.58M427.02 520.2L427.02 511.94M430.4 523.58L438.66 523.58M426.32 526.88L424.6 534.97M409.56 533.66L415.38 543.74M415.38 543.74L411.25 550.9M406.18 553.82L401.3 553.82M397.92 550.45L397.92 542.18M394.54 553.82L386.28 553.82M397.92 557.2L397.92 565.46M415.38 543.74L427.02 543.74M427.02 543.74L431.15 536.58M436.22 533.66L441.1 533.66M444.48 530.29L444.48 522.02M447.86 533.66L456.12 533.66M444.48 537.04L444.48 545.3M427.02 543.74L432.84 553.82M432.84 553.82L444.48 553.82M444.48 553.82L448.61 560.98M453.68 563.9L458.56 563.9M461.94 560.53L461.94 552.26M465.32 563.9L473.58 563.9M461.94 567.28L461.94 575.54M432.28 553.5L428.14 560.65M433.97 554.47L429.83 561.63M428.71 566.83L431.15 571.06M431.15 576.91L427.02 584.06" fill="none" stroke="#2a2a2a" stroke-width="1.1" stroke-linecap="butt"/>
<g fill="#ff4a12" stroke="#ff4a12" stroke-width="0.25" font-size="5.9" text-anchor="middle">
<text x="374.64" y="535.77">O</text>
<text x="357.18" y="505.53">O</text>
<text x="380.46" y="505.53">O</text>
<text x="345.54" y="525.69">O</text>
<text x="345.54" y="545.85">O</text>
<text x="392.1" y="525.69">O</text>
<text x="415.38" y="525.69">O</text>
<text x="409.56" y="555.93">O</text>
<text x="432.84" y="535.77">O</text>
<text x="450.3" y="566.01">O</text>
<text x="432.84" y="576.1">O</text>
</g>
<g fill="#b414c4" stroke="#b414c4" stroke-width="0.25" font-size="5.9" text-anchor="middle">
<text x="363" y="495.45">Si</text>
<text x="392.1" y="505.53">Si</text>
<text x="339.72" y="515.61">Si</text>
<text x="339.72" y="555.93">Si</text>
<text x="427.02" y="525.69">Si</text>
<text x="397.92" y="555.93">Si</text>
<text x="444.48" y="535.77">Si</text>
<text x="461.94" y="566.01">Si</text>
</g>
<g fill="#2f6bff" stroke="#2f6bff" stroke-width="0.25" font-size="5.9" text-anchor="middle">
<text x="427.02" y="566.01">N</text>
</g>
<path d="M619 513.4L630.64 513.4M630.64 513.4L636.46 523.48M636.46 523.48L632.33 530.64M627.26 533.56L619 533.56M619 533.56L613.18 523.48M613.18 523.48L619 513.4M619 513.4L614.87 506.24M614.87 500.4L617.31 496.16M616.08 491.55L608.92 487.42M620.69 490.32L624.82 483.16M621.92 494.93L629.08 499.06M630.64 513.4L634.77 506.24M639.84 503.32L644.72 503.32M648.1 499.94L648.1 491.68M651.48 503.32L659.74 503.32M648.1 506.7L648.1 514.96M613.18 523.48L604.92 523.48M599.85 520.56L597.41 516.32M594.03 510.48L589.9 503.32M598.64 511.71L605.8 507.58M592.8 515.09L585.64 519.22M619 533.56L613.18 543.64M613.18 543.64L604.92 543.64M599.85 546.56L597.41 550.8M592.8 552.03L585.64 547.9M598.64 555.41L605.8 559.54M594.03 556.65L589.9 563.8M636.46 523.48L644.72 523.48M649.79 526.4L653.92 533.56M653.92 533.56L665.56 533.56M665.56 533.56L669.69 526.4M674.76 523.48L679.64 523.48M683.02 520.1L683.02 511.84M686.4 523.48L694.66 523.48M682.32 526.78L680.6 534.87M665.56 533.56L671.38 543.64M671.38 543.64L667.25 550.8M662.18 553.72L657.3 553.72M653.92 550.35L653.92 542.08M650.54 553.72L642.28 553.72M653.92 557.1L653.92 565.36M671.38 543.64L683.02 543.64M683.02 543.64L687.15 536.48M692.22 533.56L697.1 533.56M700.48 530.19L700.48 521.92M703.86 533.56L712.12 533.56M700.48 536.94L700.48 545.2M683.02 543.64L688.84 553.72M688.84 553.72L684.71 560.88M684.71 566.73L687.15 570.96M691.76 572.2L698.92 568.06M690.53 576.81L694.66 583.96M685.92 575.57L678.76 579.7M688.84 553.72L700.48 553.72M699.92 554.05L704.05 561.2M701.61 553.07L705.74 560.23M709.68 563.8L714.56 563.8M719.63 566.73L723.76 573.88" fill="none" stroke="#2a2a2a" stroke-width="1.1" stroke-linecap="butt"/>
<g fill="#ff4a12" stroke="#ff4a12" stroke-width="0.25" font-size="5.9" text-anchor="middle">
<text x="630.64" y="535.67">O</text>
<text x="613.18" y="505.43">O</text>
<text x="636.46" y="505.43">O</text>
<text x="601.54" y="525.59">O</text>
<text x="601.54" y="545.75">O</text>
<text x="648.1" y="525.59">O</text>
<text x="671.38" y="525.59">O</text>
<text x="665.56" y="555.83">O</text>
<text x="688.84" y="535.67">O</text>
<text x="683.02" y="565.91">O</text>
<text x="717.94" y="565.91">O</text>
</g>
<g fill="#b414c4" stroke="#b414c4" stroke-width="0.25" font-size="5.9" text-anchor="middle">
<text x="619" y="495.35">Si</text>
<text x="648.1" y="505.43">Si</text>
<text x="595.72" y="515.51">Si</text>
<text x="595.72" y="555.83">Si</text>
<text x="683.02" y="525.59">Si</text>
<text x="653.92" y="555.83">Si</text>
<text x="700.48" y="535.67">Si</text>
<text x="688.84" y="576">Si</text>
</g>
<g fill="#2f6bff" stroke="#2f6bff" stroke-width="0.25" font-size="5.9" text-anchor="middle">
<text x="706.3" y="565.91">N</text>
</g>
<path d="M886.6 510.6L897.18 510.6M897.18 510.6L902.47 519.76M902.47 519.76L898.71 526.27M894.11 528.93L886.6 528.93M886.6 528.93L881.31 519.76M881.31 519.76L886.6 510.6M886.6 510.6L882.84 504.09M882.84 498.78L885.07 494.93M883.94 490.74L877.44 486.98M888.13 489.62L891.89 483.11M889.26 493.81L895.76 497.56M897.18 510.6L900.94 504.09M905.54 501.44L909.98 501.44M913.05 498.37L913.05 490.86M916.12 501.44L923.63 501.44M913.05 504.51L913.05 512.02M881.31 519.76L873.8 519.76M869.2 517.11L866.97 513.26M863.91 507.94L860.15 501.44M868.1 509.07L874.6 505.31M862.78 512.13L856.28 515.89M886.6 528.93L881.31 538.09M881.31 538.09L873.8 538.09M869.2 540.74L866.97 544.59M862.78 545.72L856.28 541.96M868.1 548.78L874.6 552.54M863.91 549.91L860.15 556.41M902.47 519.76L909.98 519.76M914.58 522.42L918.34 528.93M918.34 528.93L928.92 528.93M928.92 528.93L934.21 519.76M934.21 519.76L941.72 519.76M946.32 517.11L948.55 513.26M947.42 509.07L940.92 505.31M951.61 507.94L955.37 501.44M952.74 512.13L959.24 515.89M928.36 529.25L932.11 535.76M930.05 528.28L933.8 534.78M937.28 538.09L941.72 538.09M946.32 540.74L950.08 547.25M918.34 528.93L913.05 538.09M913.05 538.09L905.54 538.09M900.94 540.74L898.71 544.59M894.52 545.72L888.02 541.96M899.84 548.78L906.34 552.54M895.65 549.91L891.89 556.41M913.05 538.09L918.34 547.25M918.34 547.25L925.85 547.25M930.45 549.91L932.68 553.76M936.87 554.88L943.37 551.12M931.55 557.95L925.05 561.7M935.74 559.07L939.5 565.58M918.34 547.25L913.05 556.41M913.05 556.41L916.81 562.92M916.81 568.23L914.58 572.08M910.39 573.2L903.89 569.45M915.71 576.27L922.21 580.03M911.52 577.39L907.76 583.9" fill="none" stroke="#2a2a2a" stroke-width="1.1" stroke-linecap="butt"/>
<g fill="#ff4a12" stroke="#ff4a12" stroke-width="0.25" font-size="5.9" text-anchor="middle">
<text x="897.18" y="531.04">O</text>
<text x="881.31" y="503.55">O</text>
<text x="902.47" y="503.55">O</text>
<text x="870.73" y="521.87">O</text>
<text x="870.73" y="540.2">O</text>
<text x="913.05" y="521.87">O</text>
<text x="944.79" y="521.87">O</text>
<text x="944.79" y="540.2">O</text>
<text x="902.47" y="540.2">O</text>
<text x="928.92" y="549.36">O</text>
<text x="918.34" y="567.69">O</text>
</g>
<g fill="#b414c4" stroke="#b414c4" stroke-width="0.25" font-size="5.9" text-anchor="middle">
<text x="886.6" y="494.39">Si</text>
<text x="913.05" y="503.55">Si</text>
<text x="865.44" y="512.71">Si</text>
<text x="865.44" y="549.36">Si</text>
<text x="950.08" y="512.71">Si</text>
<text x="897.18" y="549.36">Si</text>
<text x="934.21" y="558.52">Si</text>
<text x="913.05" y="576.85">Si</text>
</g>
<g fill="#2f6bff" stroke="#2f6bff" stroke-width="0.25" font-size="5.9" text-anchor="middle">
<text x="934.21" y="540.2">N</text>
</g>
<path d="M1139.3 510.6L1149.88 510.6M1149.88 510.6L1155.17 519.76M1155.17 519.76L1151.41 526.27M1146.81 528.93L1139.3 528.93M1139.3 528.93L1134.01 519.76M1134.01 519.76L1139.3 510.6M1139.3 510.6L1135.54 504.09M1135.54 498.78L1137.77 494.93M1136.64 490.74L1130.14 486.98M1140.83 489.62L1144.59 483.11M1141.96 493.81L1148.46 497.56M1149.88 510.6L1153.64 504.09M1158.24 501.44L1162.68 501.44M1165.75 498.37L1165.75 490.86M1168.82 501.44L1176.33 501.44M1165.75 504.51L1165.75 512.02M1134.01 519.76L1126.5 519.76M1121.9 517.11L1119.67 513.26M1116.61 507.94L1112.85 501.44M1120.8 509.07L1127.3 505.31M1115.48 512.13L1108.98 515.89M1139.3 528.93L1134.01 538.09M1134.01 538.09L1126.5 538.09M1121.9 540.74L1119.67 544.59M1115.48 545.72L1108.98 541.96M1120.8 548.78L1127.3 552.54M1116.61 549.91L1112.85 556.41M1155.17 519.76L1162.68 519.76M1167.28 522.42L1171.04 528.93M1171.04 528.93L1181.62 528.93M1181.62 528.93L1185.38 522.42M1189.98 519.76L1194.42 519.76M1197.49 516.69L1197.49 509.18M1200.56 519.76L1208.07 519.76M1197.49 522.83L1197.49 530.34M1181.62 528.93L1186.91 538.09M1186.91 538.74L1194.42 538.74M1186.91 536.79L1194.42 536.79M1199.02 540.74L1201.25 544.59M1205.85 547.25L1213.36 547.25M1171.04 528.93L1165.75 538.09M1165.75 538.09L1158.24 538.09M1153.64 540.74L1151.41 544.59M1147.22 545.72L1140.72 541.96M1152.54 548.78L1159.04 552.54M1148.35 549.91L1144.59 556.41M1165.75 538.09L1171.04 547.25M1171.04 547.25L1178.55 547.25M1183.15 549.91L1185.38 553.76M1189.57 554.88L1196.07 551.12M1184.25 557.95L1177.75 561.7M1188.44 559.07L1192.2 565.58M1171.04 547.25L1165.75 556.41M1165.75 556.41L1169.51 562.92M1169.51 568.23L1167.28 572.08M1163.09 573.2L1156.59 569.45M1168.41 576.27L1174.91 580.03M1164.22 577.39L1160.46 583.9" fill="none" stroke="#2a2a2a" stroke-width="1.1" stroke-linecap="butt"/>
<g fill="#ff4a12" stroke="#ff4a12" stroke-width="0.25" font-size="5.9" text-anchor="middle">
<text x="1149.88" y="531.04">O</text>
<text x="1134.01" y="503.55">O</text>
<text x="1155.17" y="503.55">O</text>
<text x="1123.43" y="521.87">O</text>
<text x="1123.43" y="540.2">O</text>
<text x="1165.75" y="521.87">O</text>
<text x="1186.91" y="521.87">O</text>
<text x="1202.78" y="549.36">O</text>
<text x="1155.17" y="540.2">O</text>
<text x="1181.62" y="549.36">O</text>
<text x="1171.04" y="567.69">O</text>
</g>
<g fill="#b414c4" stroke="#b414c4" stroke-width="0.25" font-size="5.9" text-anchor="middle">
<text x="1139.3" y="494.39">Si</text>
<text x="1165.75" y="503.55">Si</text>
<text x="1118.14" y="512.71">Si</text>
<text x="1118.14" y="549.36">Si</text>
<text x="1197.49" y="521.87">Si</text>
<text x="1149.88" y="549.36">Si</text>
<text x="1186.91" y="558.52">Si</text>
<text x="1165.75" y="576.85">Si</text>
</g>
<g fill="#2f6bff" stroke="#2f6bff" stroke-width="0.25" font-size="5.9" text-anchor="middle">
<text x="1197.49" y="540.2">N</text>
</g>
<path d="M1384.45 513.4L1396.09 513.4M1396.09 513.4L1401.91 523.48M1401.91 523.48L1397.78 530.64M1392.71 533.56L1384.45 533.56M1384.45 533.56L1378.63 523.48M1378.63 523.48L1384.45 513.4M1384.45 513.4L1380.32 506.24M1380.32 500.4L1382.76 496.16M1381.53 491.55L1374.37 487.42M1386.14 490.32L1390.27 483.16M1387.37 494.93L1394.53 499.06M1396.09 513.4L1400.22 506.24M1405.29 503.32L1410.17 503.32M1413.55 499.94L1413.55 491.68M1416.93 503.32L1425.19 503.32M1413.55 506.7L1413.55 514.96M1378.63 523.48L1370.37 523.48M1365.3 520.56L1362.86 516.32M1359.48 510.48L1355.35 503.32M1364.09 511.71L1371.25 507.58M1358.25 515.09L1351.09 519.22M1384.45 533.56L1378.63 543.64M1378.63 543.64L1370.37 543.64M1365.3 546.56L1362.86 550.8M1358.25 552.03L1351.09 547.9M1364.09 555.41L1371.25 559.54M1359.48 556.65L1355.35 563.8M1401.91 523.48L1410.17 523.48M1415.24 526.4L1419.37 533.56M1419.37 533.56L1431.01 533.56M1431.01 533.56L1435.14 526.4M1440.21 523.48L1445.09 523.48M1448.47 520.1L1448.47 511.84M1451.85 523.48L1460.11 523.48M1448.47 526.86L1448.47 535.12M1431.01 533.56L1436.83 543.64M1436.83 543.64L1448.47 543.64M1448.47 543.64L1452.6 550.8M1457.67 553.72L1462.55 553.72M1465.93 550.35L1465.93 542.08M1469.31 553.72L1477.57 553.72M1465.93 557.1L1465.93 565.36M1436.27 543.32L1432.13 550.47M1437.96 544.29L1433.82 551.45M1432.7 556.65L1435.14 560.88M1435.14 566.73L1431.01 573.88M1419.37 533.56L1413.55 543.64M1413.55 543.64L1405.29 543.64M1400.22 546.56L1397.78 550.8M1393.17 552.03L1386.01 547.9M1399.01 555.41L1406.17 559.54M1394.4 556.65L1390.27 563.8M1413.55 543.64L1419.37 553.72M1419.37 553.72L1415.24 560.88M1415.24 566.73L1417.68 570.96M1422.29 572.2L1429.45 568.06M1416.45 575.57L1409.29 579.7M1421.06 576.81L1425.19 583.96" fill="none" stroke="#2a2a2a" stroke-width="1.1" stroke-linecap="butt"/>
<g fill="#ff4a12" stroke="#ff4a12" stroke-width="0.25" font-size="5.9" text-anchor="middle">
<text x="1396.09" y="535.67">O</text>
<text x="1378.63" y="505.43">O</text>
<text x="1401.91" y="505.43">O</text>
<text x="1366.99" y="525.59">O</text>
<text x="1366.99" y="545.75">O</text>
<text x="1413.55" y="525.59">O</text>
<text x="1436.83" y="525.59">O</text>
<text x="1454.29" y="555.83">O</text>
<text x="1436.83" y="565.91">O</text>
<text x="1401.91" y="545.75">O</text>
<text x="1413.55" y="565.91">O</text>
</g>
<g fill="#b414c4" stroke="#b414c4" stroke-width="0.25" font-size="5.9" text-anchor="middle">
<text x="1384.45" y="495.35">Si</text>
<text x="1413.55" y="505.43">Si</text>
<text x="1361.17" y="515.51">Si</text>
<text x="1361.17" y="555.83">Si</text>
<text x="1448.47" y="525.59">Si</text>
<text x="1465.93" y="555.83">Si</text>
<text x="1396.09" y="555.83">Si</text>
<text x="1419.37" y="576">Si</text>
</g>
<g fill="#2f6bff" stroke="#2f6bff" stroke-width="0.25" font-size="5.9" text-anchor="middle">
<text x="1431.01" y="555.83">N</text>
</g>
<path d="M1643.85 513.4L1655.49 513.4M1655.49 513.4L1661.31 523.48M1661.31 523.48L1657.18 530.64M1652.11 533.56L1643.85 533.56M1643.85 533.56L1638.03 523.48M1638.03 523.48L1643.85 513.4M1643.85 513.4L1639.72 506.24M1639.72 500.4L1642.16 496.16M1640.93 491.55L1633.77 487.42M1645.54 490.32L1649.67 483.16M1646.77 494.93L1653.93 499.06M1655.49 513.4L1659.62 506.24M1664.69 503.32L1669.57 503.32M1672.95 499.94L1672.95 491.68M1676.33 503.32L1684.59 503.32M1672.95 506.7L1672.95 514.96M1638.03 523.48L1629.77 523.48M1624.7 520.56L1622.26 516.32M1618.88 510.48L1614.75 503.32M1623.49 511.71L1630.65 507.58M1617.65 515.09L1610.49 519.22M1643.85 533.56L1638.03 543.64M1638.03 543.64L1629.77 543.64M1624.7 546.56L1622.26 550.8M1617.65 552.03L1610.49 547.9M1623.49 555.41L1630.65 559.54M1618.88 556.65L1614.75 563.8M1661.31 523.48L1669.57 523.48M1674.64 526.4L1678.77 533.56M1678.77 533.56L1690.41 533.56M1690.41 533.56L1696.23 523.48M1696.23 523.48L1704.49 523.48M1709.56 520.56L1712 516.32M1710.77 511.71L1703.61 507.58M1715.38 510.48L1719.51 503.32M1716.61 515.09L1723.77 519.22M1690.41 533.56L1694.54 540.72M1699.61 543.64L1704.49 543.64M1707.87 540.27L1707.87 532M1711.25 543.64L1719.51 543.64M1707.87 547.02L1707.87 555.28M1678.77 533.56L1672.95 543.64M1672.95 543.64L1664.69 543.64M1659.62 546.56L1657.18 550.8M1652.57 552.03L1645.41 547.9M1658.41 555.41L1665.57 559.54M1653.8 556.65L1649.67 563.8M1672.95 543.64L1678.77 553.72M1678.77 553.72L1674.64 560.88M1674.64 566.73L1677.08 570.96M1681.69 572.2L1688.85 568.06M1675.85 575.57L1668.69 579.7M1680.46 576.81L1684.59 583.96M1678.77 553.72L1690.41 553.72M1689.85 554.05L1693.98 561.2M1691.54 553.07L1695.67 560.23M1699.61 563.8L1704.49 563.8M1709.56 566.73L1713.69 573.88" fill="none" stroke="#2a2a2a" stroke-width="1.1" stroke-linecap="butt"/>
<g fill="#ff4a12" stroke="#ff4a12" stroke-width="0.25" font-size="5.9" text-anchor="middle">
<text x="1655.49" y="535.67">O</text>
<text x="1638.03" y="505.43">O</text>
<text x="1661.31" y="505.43">O</text>
<text x="1626.39" y="525.59">O</text>
<text x="1626.39" y="545.75">O</text>
<text x="1672.95" y="525.59">O</text>
<text x="1707.87" y="525.59">O</text>
<text x="1696.23" y="545.75">O</text>
<text x="1661.31" y="545.75">O</text>
<text x="1672.95" y="565.91">O</text>
<text x="1707.87" y="565.91">O</text>
</g>
<g fill="#b414c4" stroke="#b414c4" stroke-width="0.25" font-size="5.9" text-anchor="middle">
<text x="1643.85" y="495.35">Si</text>
<text x="1672.95" y="505.43">Si</text>
<text x="1620.57" y="515.51">Si</text>
<text x="1620.57" y="555.83">Si</text>
<text x="1713.69" y="515.51">Si</text>
<text x="1707.87" y="545.75">Si</text>
<text x="1655.49" y="555.83">Si</text>
<text x="1678.77" y="576">Si</text>
</g>
<g fill="#2f6bff" stroke="#2f6bff" stroke-width="0.25" font-size="5.9" text-anchor="middle">
<text x="1696.23" y="565.91">N</text>
</g>
<path d="M384.9 676.2L395.48 676.2M395.48 676.2L400.77 685.36M400.77 685.36L397.01 691.87M392.41 694.53L384.9 694.53M384.9 694.53L379.61 685.36M379.61 685.36L384.9 676.2M384.9 676.2L381.14 669.69M381.14 664.38L383.37 660.53M382.24 656.34L375.74 652.58M386.43 655.22L390.19 648.71M387.56 659.41L394.06 663.16M395.48 676.2L399.24 669.69M403.84 667.04L408.28 667.04M411.35 663.97L411.35 656.46M414.42 667.04L421.93 667.04M411.35 670.11L411.35 677.62M379.61 685.36L372.1 685.36M367.5 682.71L365.27 678.86M362.21 673.54L358.45 667.04M366.4 674.67L372.9 670.91M361.08 677.73L354.58 681.49M384.9 694.53L379.61 703.69M379.61 703.69L372.1 703.69M367.5 706.34L365.27 710.19M361.08 711.32L354.58 707.56M366.4 714.38L372.9 718.14M362.21 715.51L358.45 722.01M400.77 685.36L408.28 685.36M412.88 688.02L416.64 694.53M416.64 694.53L427.22 694.53M426.66 694.85L430.41 701.36M428.35 693.88L432.1 700.38M435.58 703.69L440.02 703.69M444.62 706.34L448.38 712.85M416.64 694.53L411.35 703.69M411.35 703.69L403.84 703.69M399.24 706.34L397.01 710.19M392.82 711.32L386.32 707.56M398.14 714.38L404.64 718.14M393.95 715.51L390.19 722.01M411.35 703.69L416.64 712.85M416.64 712.85L424.15 712.85M428.75 715.51L430.98 719.36M435.17 720.48L441.67 716.72M429.85 723.55L423.35 727.3M434.04 724.67L437.8 731.18M416.64 712.85L411.35 722.01M411.35 722.01L400.77 722.01M400.77 722.01L397.01 728.52M392.41 731.18L387.97 731.18M384.9 728.11L384.9 720.6M381.83 731.18L374.32 731.18M384.9 734.24L384.9 741.76M411.35 722.01L415.11 728.52M415.11 733.83L412.88 737.68M408.69 738.8L402.19 735.05M414.01 741.87L420.51 745.63M409.82 742.99L406.06 749.5" fill="none" stroke="#2a2a2a" stroke-width="1.1" stroke-linecap="butt"/>
<g fill="#ff4a12" stroke="#ff4a12" stroke-width="0.25" font-size="5.9" text-anchor="middle">
<text x="395.48" y="696.64">O</text>
<text x="379.61" y="669.15">O</text>
<text x="400.77" y="669.15">O</text>
<text x="369.03" y="687.47">O</text>
<text x="369.03" y="705.8">O</text>
<text x="411.35" y="687.47">O</text>
<text x="443.09" y="705.8">O</text>
<text x="400.77" y="705.8">O</text>
<text x="427.22" y="714.96">O</text>
<text x="395.48" y="733.29">O</text>
<text x="416.64" y="733.29">O</text>
</g>
<g fill="#b414c4" stroke="#b414c4" stroke-width="0.25" font-size="5.9" text-anchor="middle">
<text x="384.9" y="659.99">Si</text>
<text x="411.35" y="669.15">Si</text>
<text x="363.74" y="678.31">Si</text>
<text x="363.74" y="714.96">Si</text>
<text x="395.48" y="714.96">Si</text>
<text x="432.51" y="724.12">Si</text>
<text x="384.9" y="733.29">Si</text>
<text x="411.35" y="742.45">Si</text>
</g>
<g fill="#2f6bff" stroke="#2f6bff" stroke-width="0.25" font-size="5.9" text-anchor="middle">
<text x="432.51" y="705.8">N</text>
</g>
</g>
<path d="M284.2 468.5L286.7 471.3L290.9 465.7" fill="none" stroke="#1a1a1a" stroke-width="1.9"/>
<path d="M1822.6 579.8V586.2L1818.6 583Z" fill="#555"/>
<g fill="none" stroke="#fff" stroke-width="1">
<rect x="1794.5" y="141.6" width="7" height="6.8"/><path d="M1796.8 141.4V139.4H1803.6V146.2H1801.8"/>
<path d="M1818 139.2L1827 149M1827 139.2L1818 149"/>
</g>
<g fill="none" stroke="#ff0000" stroke-width="3" stroke-linejoin="miter">
<path d="M173.2 140.9V377.8H243"/>
<path d="M817.5 154V355.2H871"/>
<path d="M1169.7 148.8V189.3H1069.2V204"/>
<path d="M1627.6 75.8H1691V186"/>
<path d="M2027.7 149V338H1823"/>
</g>
<g fill="#ff0000">
<path d="M241.4 364.2V391.5L267.9 377.8Z"/>
<path d="M869.6 341.9V368.5L897 355.2Z"/>
<path d="M1055.8 202.2H1082.5L1069.2 228.7Z"/>
<path d="M1677.8 184.8H1704.4L1691 211.1Z"/>
<path d="M1825.2 325V351.2L1798 338Z"/>
</g>
</svg>
</body></html>
